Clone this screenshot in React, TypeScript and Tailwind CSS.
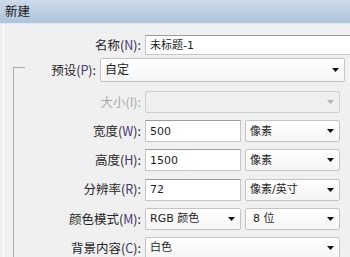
import type { ReactNode } from "react";

// small black drop-down triangle
function Arrow({ disabled = false }: { disabled?: boolean }) {
  return (
    <svg width="7" height="4" viewBox="0 0 7 4" className="shrink-0">
      <path d="M0 0H7L3.5 4Z" fill={disabled ? "#b4b4b4" : "#111111"} />
    </svg>
  );
}

function Label({ text, keyName, width, disabled = false }: { text: string; keyName: string; width: string; disabled?: boolean }) {
  return (
    <div className={`${width} shrink-0 text-right whitespace-nowrap pr-[2px] text-[12.5px] ${disabled ? "text-[#a8a8a8]" : "text-[#262626]"}`}>
      {text}(<span className={disabled ? "" : "text-[#45387a]"}>{keyName}</span>):
    </div>
  );
}

function TextBox({ value, width }: { value: string; width: string }) {
  return (
    <div className={`${width} h-full shrink-0 ml-[2px] flex items-center pl-[4px] bg-white border border-[#c6c6c6] border-t-[#9c9c9c] font-['DejaVu_Sans','Noto_Sans_CJK_SC',sans-serif] text-[11px] text-[#1e1e1e]`}>
      {value}
    </div>
  );
}

function Select({ children, width, disabled = false }: { children?: ReactNode; width: string; disabled?: boolean }) {
  return (
    <div
      className={`${width} h-full shrink-0 flex items-center justify-between pl-[4px] pr-[5px] rounded-[2px] border font-['DejaVu_Sans','Noto_Sans_CJK_SC',sans-serif] text-[11px] text-[#1e1e1e] ${
        disabled ? "bg-[#efefef] border-[#d0d0d0]" : "bg-gradient-to-b from-white to-[#f5f5f5] border-[#c4c4c4]"
      }`}
    >
      <span>{children}</span>
      <Arrow disabled={disabled} />
    </div>
  );
}

export default function App() {
  return (
    <div className="w-[350px] h-[257px] overflow-hidden bg-[#f0f0f0] flex flex-col font-['Noto_Sans_CJK_SC',sans-serif] text-[12px] leading-none">
      {/* title bar */}
      <div className="h-[24px] shrink-0 flex items-center pl-[5px] bg-gradient-to-b from-[#cddbea] to-[#adc4db] border-b border-[#e2e9f0] text-[12.5px] text-[#1a1a1a]">
        新建
      </div>

      <div className="flex-1 ml-[3px] border-l border-[#fdfdfd] flex flex-col">
        {/* name */}
        <div className="mt-[11px] h-[20px] flex items-center shrink-0">
          <Label text="名称" keyName="N" width="w-[139px]" />
          <TextBox value="未标题-1" width="w-[215px]" />
        </div>

        {/* preset, acts as the group box legend */}
        <div className="mt-[3px] h-[24px] flex items-center shrink-0">
          <div className="ml-[9px] w-[12px] h-[15px] self-end border-l border-t border-[#a9a9a9]" />
          <Label text="预设" keyName="P" width="w-[73px]" />
          <div className="ml-[2px] h-full">
            <Select width="w-[245px]">
              <span className="text-[12px]">自定</span>
            </Select>
          </div>
        </div>

        {/* group box */}
        <div className="flex-1 ml-[9px] border-l border-[#a9a9a9] flex flex-col gap-[7.2px] pt-[9px]">
          <div className="h-[22px] flex items-center shrink-0">
            <Label text="大小" keyName="I" width="w-[129px]" disabled />
            <div className="ml-[2px] h-full">
              <Select width="w-[195px]" disabled />
            </div>
          </div>

          <div className="h-[22px] flex items-center shrink-0">
            <Label text="宽度" keyName="W" width="w-[129px]" />
            <TextBox value="500" width="w-[96px]" />
            <div className="ml-[4px] h-full">
              <Select width="w-[95px]">像素</Select>
            </div>
          </div>

          <div className="h-[22px] flex items-center shrink-0">
            <Label text="高度" keyName="H" width="w-[129px]" />
            <TextBox value="1500" width="w-[96px]" />
            <div className="ml-[4px] h-full">
              <Select width="w-[95px]">像素</Select>
            </div>
          </div>

          <div className="h-[22px] flex items-center shrink-0">
            <Label text="分辨率" keyName="R" width="w-[129px]" />
            <TextBox value="72" width="w-[96px]" />
            <div className="ml-[4px] h-full">
              <Select width="w-[95px]">像素/英寸</Select>
            </div>
          </div>

          <div className="h-[22px] flex items-center shrink-0">
            <Label text="颜色模式" keyName="M" width="w-[129px]" />
            <div className="ml-[2px] h-full">
              <Select width="w-[96px]">RGB 颜色</Select>
            </div>
            <div className="ml-[4px] h-full">
              <Select width="w-[95px]">
                <span className="pl-[3px]">8 位</span>
              </Select>
            </div>
          </div>

          <div className="h-[22px] flex items-center shrink-0">
            <Label text="背景内容" keyName="C" width="w-[129px]" />
            <div className="ml-[2px] h-full">
              <Select width="w-[195px]">白色</Select>
            </div>
          </div>
        </div>
      </div>
    </div>
  );
}
